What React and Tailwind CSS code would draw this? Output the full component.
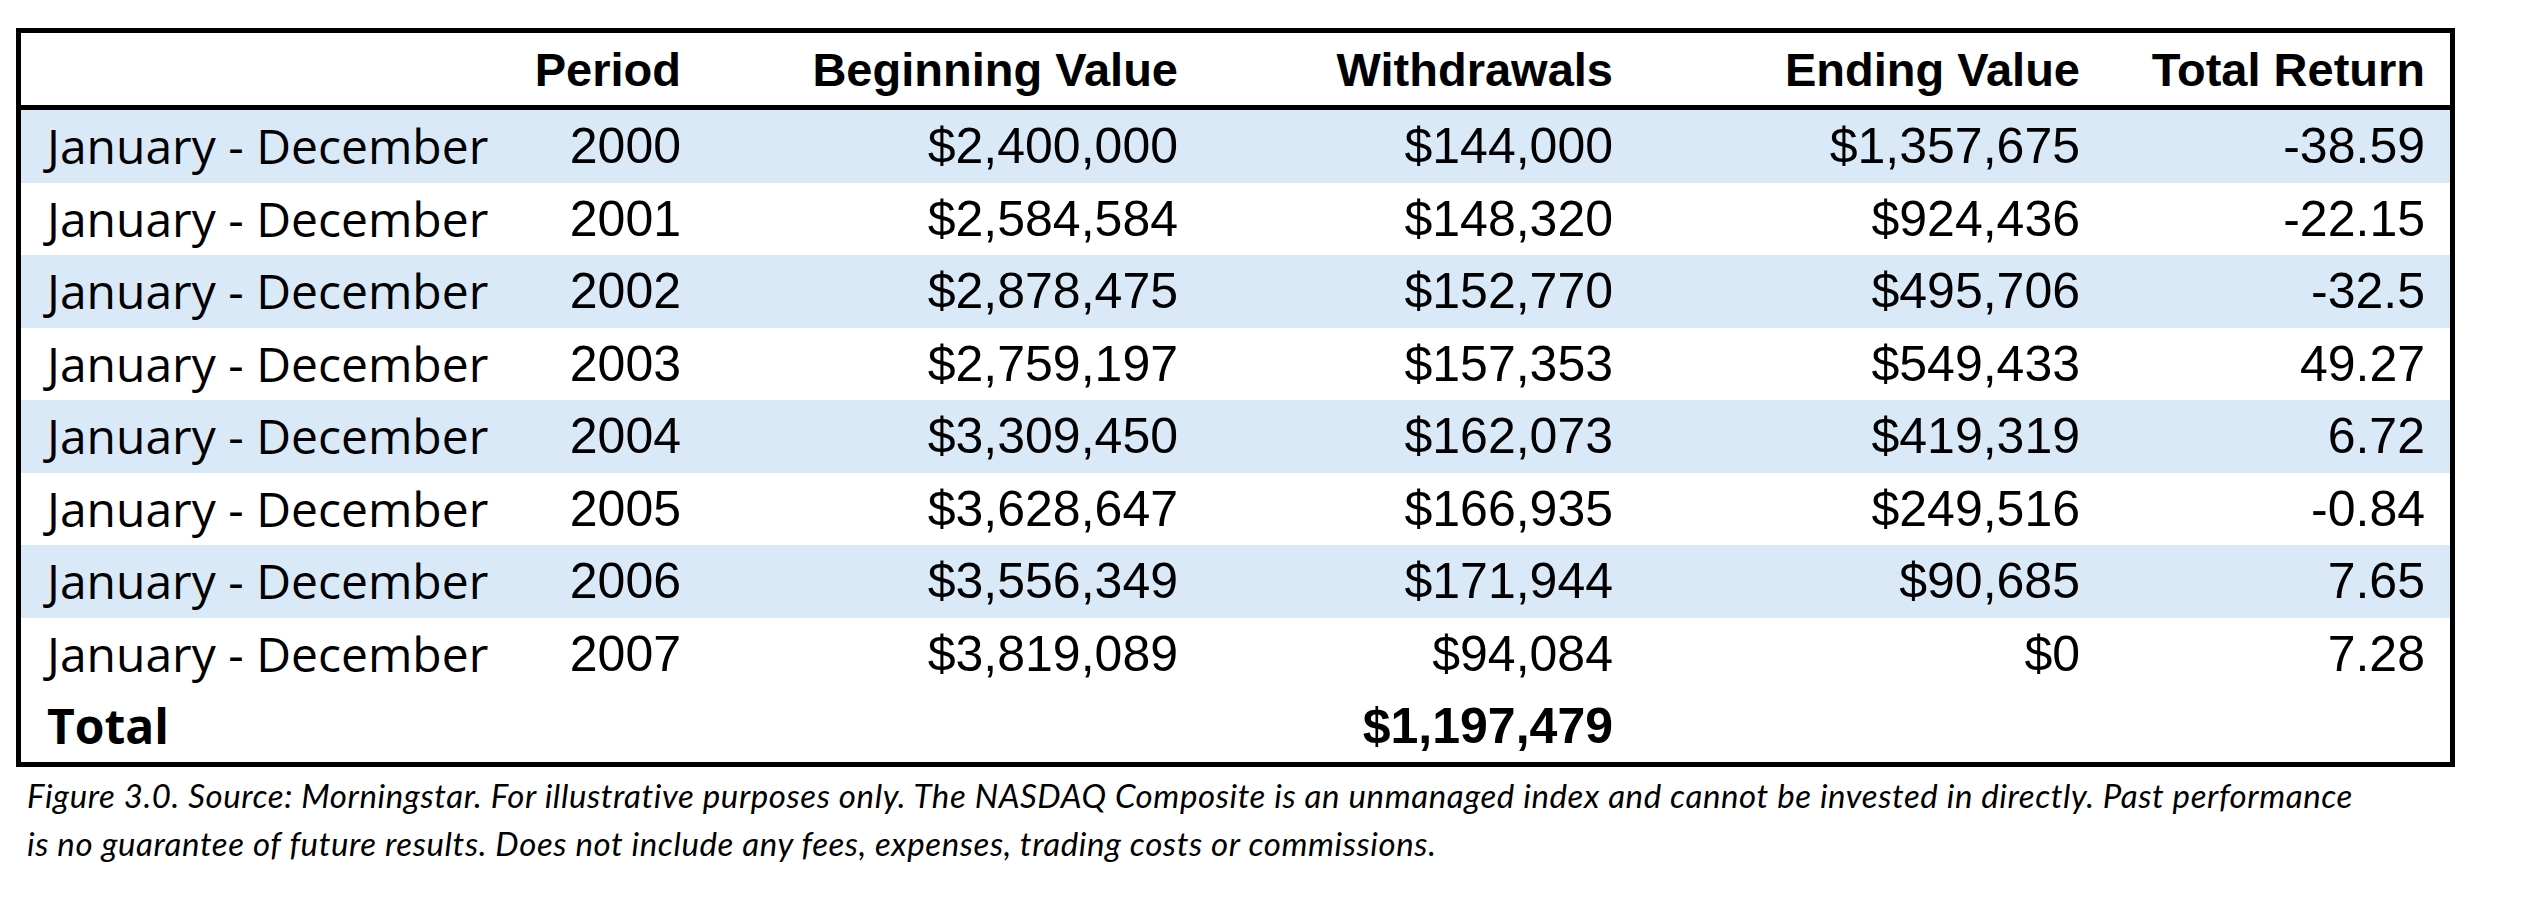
import React from 'react';

const rows = [
  { year: '2000', begin: '$2,400,000', wd: '$144,000', end: '$1,357,675', ret: '-38.59' },
  { year: '2001', begin: '$2,584,584', wd: '$148,320', end: '$924,436', ret: '-22.15' },
  { year: '2002', begin: '$2,878,475', wd: '$152,770', end: '$495,706', ret: '-32.5' },
  { year: '2003', begin: '$2,759,197', wd: '$157,353', end: '$549,433', ret: '49.27' },
  { year: '2004', begin: '$3,309,450', wd: '$162,073', end: '$419,319', ret: '6.72' },
  { year: '2005', begin: '$3,628,647', wd: '$166,935', end: '$249,516', ret: '-0.84' },
  { year: '2006', begin: '$3,556,349', wd: '$171,944', end: '$90,685', ret: '7.65' },
  { year: '2007', begin: '$3,819,089', wd: '$94,084', end: '$0', ret: '7.28' },
];

const cols = 'grid grid-cols-[479px_206px_497px_435px_467px_345px]';
const label = "pl-[26px] font-['Open_Sans',sans-serif] text-[48px]";
const num = "pr-[25px] text-right font-['Liberation_Sans',Arial,sans-serif] text-[50px]";
const head = "pr-[25px] text-right font-['Liberation_Sans',Arial,sans-serif] font-bold text-[47px]";

const App = () => {
  return (
    <div className='w-[2526px] h-[914px] bg-white text-black overflow-hidden'>
      <div className='ml-[16px] mt-[28px] w-[2439px] border-[5px] border-black'>
        {/* header */}
        <div className={`${cols} h-[77px] items-center border-b-[5px] border-black leading-none`}>
          <div></div>
          <div className={head}>Period</div>
          <div className={head}>Beginning Value</div>
          <div className={head}>Withdrawals</div>
          <div className={head}>Ending Value</div>
          <div className={head}>Total Return</div>
        </div>

        {rows.map((r, i) => (
          <div
            key={r.year}
            className={`${cols} h-[72.5px] items-center leading-none ${i % 2 === 0 ? 'bg-[#dae9f8]' : 'bg-white'}`}
          >
            <div className={label}>January - December</div>
            <div className={num}>{r.year}</div>
            <div className={num}>{r.begin}</div>
            <div className={num}>{r.wd}</div>
            <div className={num}>{r.end}</div>
            <div className={num}>{r.ret}</div>
          </div>
        ))}

        {/* total */}
        <div className={`${cols} h-[72px] items-center leading-none`}>
          <div className={`${label} font-bold`}>Total</div>
          <div></div>
          <div></div>
          <div className={`${num} font-bold`}>$1,197,479</div>
          <div></div>
          <div></div>
        </div>
      </div>

      <div className="ml-[27px] mt-[4px] font-['Lato',sans-serif] italic text-[33px] tracking-[0.6px] leading-[48px]">
        <div>Figure 3.0. Source: Morningstar. For illustrative purposes only. The NASDAQ Composite is an unmanaged index and cannot be invested in directly. Past performance</div>
        <div>is no guarantee of future results. Does not include any fees, expenses, trading costs or commissions.</div>
      </div>
    </div>
  );
};

export default App;
